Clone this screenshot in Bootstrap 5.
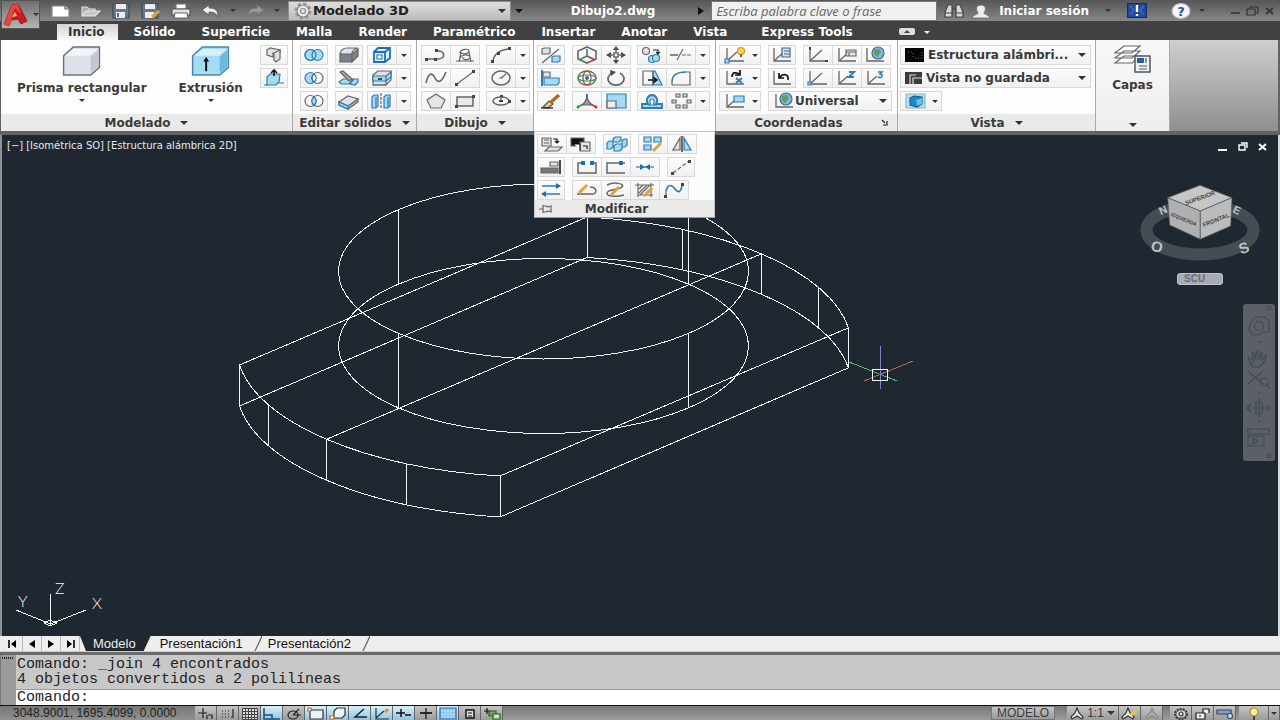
<!DOCTYPE html>
<html lang="es">
<head>
<meta charset="utf-8">
<meta name="viewport" content="width=device-width, initial-scale=1">
<title>Dibujo2.dwg</title>
<link href="https://cdn.jsdelivr.net/npm/bootstrap@5.3.0/dist/css/bootstrap.min.css" rel="stylesheet">
<style>
:root{--ui:"DejaVu Sans","Open Sans",sans-serif;--ink:#3a3a3a;--canvas:#1f2830}
body{font-family:var(--ui);font-size:12px;line-height:16px;color:var(--ink);background:#6a6a6a}
.btn{--bs-btn-padding-x:0;--bs-btn-padding-y:0;--bs-btn-border-radius:0;--bs-btn-font-size:12px;--bs-btn-line-height:16px;--bs-btn-color:var(--ink);font-weight:700;white-space:nowrap;display:inline-flex;align-items:center;justify-content:center}
svg{display:block;flex:none;fill:none;stroke:#666;stroke-width:1.2}
.tri{flex:none;border:4px solid transparent;border-top-color:#333;border-bottom:0;width:0;height:0}
.tri-sm{border-width:3px;border-bottom:0}
.tri-dark{border-top-color:#111}
.tri-light{border-top-color:#eee}
.bl{fill:#a8d9f2;stroke:#2c7db3}.bs{stroke:#2c7db3}.bf{fill:#1f6fa8;stroke:none}.gr{fill:#dfe2e8}.dk{fill:#444;stroke:none}.or{stroke:#e3a136;stroke-width:3}.rd{stroke:#c0392b}.gn{stroke:#2d9a4b}.wt{fill:#fff}
/* title bar */
.titlebar{height:21px;background:linear-gradient(#565656,#868686)}
.titlebar .btn{border:0}
.appbtn{left:1px;top:0;width:39px;height:29px;z-index:5;border:1px solid #555;background:linear-gradient(#6e6e6e,#b5b5b5)}
.qat{padding-left:46px;padding-right:4px}
.qat .btn{width:30px;height:20px}
.qat .caret-btn{width:14px}
.titlebar .workspace{width:223px;height:20px;background:linear-gradient(#dedede,#bcbcbc);border:1px solid #8c8c8c;color:#222;font-size:13px}
.doc-title{color:#fff;font-weight:700;min-width:0}
.search{width:226px;height:20px;border:1px solid #777;border-radius:0;background:#f0f0f0;font:italic 13px/16px "Open Sans",sans-serif;padding:0 4px;color:#666}
.search::placeholder{color:#666;opacity:1}
.find-btn{margin:0 7px}
/* ribbon */
.ribbon-tabs{height:19px;background:#414141;padding-left:57px}
.ribbon-tabs .nav-link{color:#fff;font-weight:700;padding:0 13px;height:16px;line-height:16px;border:0;border-radius:0;white-space:nowrap}
.ribbon-tabs .nav-link.active{color:#333;background:linear-gradient(#d4d4d4,#f8f8f8);padding:0 13px 0 11px;margin-right:3px}
.ribbon{display:grid;grid-template-columns:292px 124px 117px 182px 182px 198px 74px 1fr;height:95px;padding:0 2px 0 1px;border-bottom:4px solid #5f6465;background:#5f6465}
.pane{background:#fdfdfd;border-right:1px solid #a9a9a9;display:flex;flex-direction:column;position:relative;min-width:0}
.pane-body{flex:1;padding-top:5px}
.pane-title{height:17px;background:#eaeaea;color:#3a3a3a;font-weight:700;display:flex;align-items:center;justify-content:center;gap:10px;border:0;padding:0;width:100%}
.pane-title.cornered{padding-right:16px}
.pane-light{background:linear-gradient(#f8f8f8,#eee)}
.tools,.stack{display:grid;row-gap:3px;align-content:start}
.tools-solid{grid-template-columns:35px 32px 44px;padding-left:7px}
.tools-draw{grid-template-columns:65px 44px;padding-left:4px}
.tools-mod{grid-template-columns:35px 65px 74px;padding-left:3px}
.tools-ucs{grid-template-columns:49px 35px 89px;padding-left:3px}
.wide2{grid-column:span 2}
.tb{height:20px;width:28px;border:1px solid #d9d9d9;background:linear-gradient(#fcfcfc,#f1f1f1);flex:none!important}
.btn-group>.tb{width:30px}
.btn-group>.tb-caret{width:15px}
.tb-wide{width:42px}
.combo{height:20px;border:1px solid #d9d9d9;background:linear-gradient(#fcfcfc,#f1f1f1)}
.big{border:0;flex-direction:column;justify-content:flex-start;gap:3px;padding-top:1px}
.solids{padding-left:16px;padding-right:4px}
.big+.big{margin-left:32px}
.flyout{top:91px;left:0;right:0;z-index:4;background:#fcfcfc;border:1px solid #c4c4c4;border-bottom-color:#999}
.flyout-tools{display:flex;flex-direction:column;row-gap:3px;padding:2px 0 0 2px}
.flyout-tools>div{display:flex;gap:7px}
.views{padding-left:2px;padding-right:4px}
.rest{background:linear-gradient(#cfcfcf,#8f8f8f)}
/* drawing area */
.canvas{flex:1;min-height:300px;background:var(--canvas);border-left:2px solid #8d9194;border-right:2px solid #d8dadb}
.drawing{width:calc(100% + 4px);height:100%;margin:0 -2px;stroke:#f2f4f5;stroke-width:1;shape-rendering:crispEdges}
.vp-label{left:5px;top:3px;gap:3px}
.vp-label .btn{color:#e6e8ea;font-size:10px;font-weight:400;border:0}
.vp-win{right:5px;top:4px}
.vp-win .btn{border:0;width:20px;height:16px}
.vcube{right:16px;top:42px}
.btn.scu{right:55px;top:138px;width:46px;height:12px;border:1px solid #c2c3cd;border-radius:3px;background:#a8aab5;font:600 10px/10px "Liberation Sans",sans-serif;justify-content:flex-start;color:#6a6d79;padding-left:6px}
.navbox{right:3px;top:169px;width:32px;height:157px;background:#5b6067;border-radius:3px}
/* layout tabs */
.layouts{height:16px;background:#eee;border-bottom:1px solid #ccc}
.layouts .btn{font:13px/15px "Liberation Sans",Arial,sans-serif;color:#111;border:0;height:15px}
.layouts .step{width:19px;border-right:1px solid #bbb}
.layouts .lt{padding:0 11px 0 6px}
.layouts .lt.active{background:var(--canvas);color:#eee;clip-path:polygon(0 0,100% 0,calc(100% - 7px) 100%,6px 100%);padding:0 15px 0 13px;margin-right:3px}
/* command line */
.cmd{border-top:3px solid #6b6b6b;background:#c8c8c8;font-family:"Liberation Mono","DejaVu Sans Mono",monospace;font-size:15px;line-height:15px;color:#222}
.history{padding:2px 0 2px 1px}
.grip{width:16px;background:#9b9b9b;border-left:1px solid #777}
.cmd-line{border-top:1px solid #999;background:#fff;height:16px;padding-left:1px}
.cmd-line input{border:0;outline:0;background:transparent;flex:1;min-width:0;padding:0}
/* status bar */
.status{height:15px;border-top:1px solid #111;background:linear-gradient(#777,#9c9c9c);font:12px/14px "Liberation Sans",Arial,sans-serif;color:#222}
.coords{width:195px;padding-left:13px;background:linear-gradient(#777,#919191)}
.status .btn{height:14px;width:22px;border:0;border-right:1px solid #666;background:linear-gradient(#c4c4c4,#9b9b9b);font:12px/14px "Liberation Sans",Arial,sans-serif}
.status .btn.on{background:linear-gradient(#d7f0fb,#8fc4dc)}
.status .btn.w-model{width:64px;border:1px solid #777}
.status .btn.w-scale{width:52px;gap:3px;margin-left:12px}
.status .btn.w-space{margin-left:7px}
.status .btn.w-bulb{width:30px;margin-left:3px}
.status .btn.w-menu{width:11px}
</style>
</head>
<body class="d-flex flex-column min-vh-100">

<header class="position-relative">
<button class="btn appbtn position-absolute" aria-label="Menú de aplicación">
<svg width="26" height="26" viewBox="0 0 26 26" stroke="none"><path d="M1 22 9 3 15 2 24 19 18 22 15 17 8 18 6 24z" fill="#c91d19" stroke="#8e1010" stroke-width=".8"/><path d="M9 3 15 2 18 12 12 6 6 24 1 22z" fill="#e8453c" stroke="none"/><path d="M9 15 12 10 14 14z" fill="#f0b8b2" stroke="none"/></svg><span class="tri tri-sm ms-1"></span></button>

<div class="titlebar d-flex align-items-center">
 <div class="qat d-flex align-items-center">
  <button class="btn" aria-label="Nuevo"><svg width="20" height="16" viewBox="0 0 20 16"><path class="wt" stroke="#888" d="M1 3h13l4 3v8H1z"/><path d="M14 3v3h4" fill="#ccc"/></svg></button>
  <button class="btn" aria-label="Abrir"><svg width="20" height="16" viewBox="0 0 20 16"><path fill="#aaa" stroke="#ddd" d="M1 13V4h5l2 2h6v2"/><path fill="#c4c8ce" stroke="#e8e8e8" d="M1 13 5 8h14l-5 5z"/></svg></button>
  <button class="btn" aria-label="Guardar"><svg width="18" height="16" viewBox="0 0 18 16"><path fill="#667790" stroke="#3c4a5e" d="M1 1h16v14H1z"/><path fill="#eee" stroke="none" d="M4 1h10v5H4zM4 9h9v6H4z"/><path d="M6 10v4" stroke-width="2"/></svg></button>
  <button class="btn" aria-label="Guardar como"><svg width="20" height="16" viewBox="0 0 20 16"><path fill="#667790" stroke="#3c4a5e" d="M1 1h16v14H1z"/><path fill="#eee" stroke="none" d="M4 1h10v5H4zM4 9h9v6H4z"/><path class="or" d="m11 14 7-6"/></svg></button>
  <button class="btn" aria-label="Imprimir"><svg width="20" height="16" viewBox="0 0 20 16"><path class="wt" stroke="#777" d="M5 1h10v5H5z"/><path fill="#dfe1e5" stroke="#555" d="M1 6h18v6H1z"/><path class="wt" stroke="#666" d="M4 10h12l1 5H3z"/></svg></button>
  <button class="btn" aria-label="Deshacer"><svg width="20" height="16" viewBox="0 0 20 16"><path fill="#f2f2f2" stroke="#555" stroke-width=".8" d="M1 7 8 2v3c7 0 9 3 9 9-2-4-4-5-9-5v3z"/></svg></button>
  <button class="btn caret-btn" aria-label="Lista deshacer"><span class="tri tri-sm"></span></button>
  <button class="btn" aria-label="Rehacer"><svg width="20" height="16" viewBox="0 0 20 16"><path fill="#999" stroke="#777" d="M19 7 12 2v3c-7 0-9 3-9 9 2-4 4-5 9-5v3z"/></svg></button>
  <button class="btn caret-btn" aria-label="Lista rehacer"><span class="tri tri-sm"></span></button>
 </div>
 <button class="btn workspace justify-content-start px-1"><svg width="20" height="18" viewBox="0 0 20 18"><circle cx="10" cy="9" r="7" stroke="#999" stroke-width="3" stroke-dasharray="3.2 2.3"/><circle cx="10" cy="9" r="6" fill="#e8e8e8" stroke="#888"/><circle cx="10" cy="9" r="2.5" stroke="#888"/></svg>Modelado 3D<span class="tri ms-auto"></span></button>
 <button class="btn px-1" aria-label="Personalizar"><span class="tri tri-dark"></span></button>
 <div class="doc-title flex-grow-1 text-center ps-1">Dibujo2.dwg</div>
 <svg width="16" height="14" viewBox="0 0 16 14"><path fill="#111" stroke="none" d="M3 3l6 4-6 4z"/></svg>
 <input class="search" type="search" placeholder="Escriba palabra clave o frase" aria-label="Buscar">
 <button class="btn find-btn" aria-label="Buscar ayuda"><svg width="20" height="16" viewBox="0 0 20 16"><path fill="#d8d8d8" stroke="#444" d="M4 2h4v12H1V9zM12 2h4l3 7v5h-7z"/><path stroke="#444" d="M8 6h4M1 10h7M12 10h7"/></svg></button>
 <button class="btn"><svg width="20" height="16" viewBox="0 0 20 16"><path fill="#eee" stroke="#777" d="M1 15c0-3 4-3 6-5-3-4-2-8 3-8s6 4 3 8c2 2 6 2 6 5z"/></svg><span class="text-white ms-2">Iniciar sesión</span><span class="tri tri-sm ms-3"></span></button>
 <button class="btn ms-3 me-3" aria-label="Exchange"><svg width="20" height="15" viewBox="0 0 20 15"><path fill="#234a9c" stroke="#152c60" d="M.5.5h19v14H.5z"/><path d="M3 3l4 4-4 5M17 3l-4 4 4 5" stroke="#4a6fb8"/><path d="M10 2v7M10 11v2" stroke="#fff" stroke-width="2.4"/></svg></button>
 <button class="btn ms-2"><svg width="20" height="18" viewBox="0 0 20 18"><ellipse cx="10" cy="9" rx="9" ry="7.5" fill="#f4f6fa" stroke="#bbb"/><text x="10" y="14" font-size="13" font-weight="700" fill="#1f4fa8" stroke="none" text-anchor="middle">?</text></svg><span class="tri tri-sm ms-2"></span></button>
 <div class="d-flex gap-1 ps-4 pe-1">
  <button class="btn" aria-label="Minimizar"><svg width="13" height="14" viewBox="0 0 13 14"><path d="M2 9h9" stroke="#333" stroke-width="1.6"/></svg></button>
  <button class="btn" aria-label="Restaurar"><svg width="13" height="14" viewBox="0 0 13 14"><path stroke="#333" d="M1 5h8v6H1zM4 5V3h8v6H9"/></svg></button>
  <button class="btn" aria-label="Cerrar"><svg width="13" height="14" viewBox="0 0 13 14"><path d="m3 4 7 6M10 4l-7 6" stroke="#333" stroke-width="1.8"/></svg></button>
 </div>
</div>

<nav class="ribbon-tabs nav align-items-end flex-nowrap">
 <a class="nav-link active" href="#">Inicio</a><a class="nav-link" href="#">Sólido</a><a class="nav-link" href="#">Superficie</a><a class="nav-link" href="#">Malla</a><a class="nav-link" href="#">Render</a><a class="nav-link" href="#">Paramétrico</a><a class="nav-link" href="#">Insertar</a><a class="nav-link" href="#">Anotar</a><a class="nav-link" href="#">Vista</a><a class="nav-link ms-2" href="#">Express Tools</a>
 <button class="btn border-0 ms-4 ps-2" aria-label="Minimizar cinta"><svg width="18" height="16" viewBox="0 0 18 16"><rect x="1" y="4" width="16" height="7" rx="2" fill="#dcdfe6" stroke="none"/><path class="dk" d="M6 9l3-3 3 3z"/></svg><span class="tri tri-sm tri-light ms-2"></span></button>
</nav>

<div class="ribbon">
<section class="pane">
 <div class="pane-body d-flex align-items-start solids">
  <button class="btn big"><svg width="40" height="31" viewBox="0 0 40 32"><path fill="#dfe1ea" stroke="#6c707c" stroke-width="1.5" d="M1 10 11 1h27v21L29 30H1z"/><path fill="#f4f4f8" stroke="none" d="M3 10 12 3h24l-8 7z"/><path fill="#c3c6d2" stroke="none" d="M29 11l8-7v17l-8 7z"/></svg><span>Prisma rectangular</span><span class="tri tri-sm"></span></button>
  <button class="btn big"><svg width="40" height="31" viewBox="0 0 40 32"><path fill="#a5dbf3" stroke="#4c87a6" stroke-width="1.5" d="M1 10 11 1h27v21L29 30H1z"/><path fill="#d5f0fb" stroke="none" d="M3 10 12 3h24l-8 7z"/><path fill="#6fb9de" stroke="none" d="M29 11l8-7v17l-8 7z"/><path d="M15 26V14" stroke="#111" stroke-width="2"/><path fill="#111" stroke="none" d="M12 16l3-5 3 5z"/></svg><span>Extrusión</span><span class="tri tri-sm"></span></button>
  <div class="ms-auto stack">
   <button class="btn tb" aria-label="Polisólido"><svg width="26" height="18" viewBox="0 0 26 18"><path class="gr" d="M6 4l3-2 10 2v3l-4 2-3-2v4L6 9z"/><path class="gr" d="M13 7l6-3v9l-4 3-2-2z"/></svg></button>
   <button class="btn tb" aria-label="Pulsartirar"><svg width="26" height="18" viewBox="0 0 26 18"><path class="bl" d="M6 8l3-3h10l-1 8-3 3H6z"/><path d="M3 16h4M18 14h5" class="bs"/><path stroke="#111" stroke-width="1.6" d="M13 7V2M10 4l3-3 3 3"/></svg></button>
  </div>
 </div>
 <button class="pane-title">Modelado <span class="tri"></span></button>
</section>

<section class="pane">
 <div class="pane-body"><div class="tools tools-solid">
  <button class="btn tb" aria-label="Unión"><svg width="26" height="18" viewBox="0 0 26 18"><g class="bl"><circle cx="9.5" cy="9" r="5.5"/><circle cx="16.5" cy="9" r="5.5"/></g><circle cx="9.5" cy="9" r="5.5" class="bs"/></svg></button>
  <button class="btn tb" aria-label="Chaflán"><svg width="26" height="18" viewBox="0 0 26 18"><path fill="#7c8190" d="M4 8h12v8H4zM16 8l6-5v7l-6 6z"/><path class="gr" d="M4 8C5 4 8 2 11 2h11c-4 1-6 3-6 6z"/></svg></button>
  <div class="btn-group"><button class="btn tb" aria-label="Extraer aristas"><svg width="26" height="18" viewBox="0 0 26 18"><path fill="#d7edf8" stroke="#1f6fb0" stroke-width="1.8" d="M5 6h11v10H5zM5 6l4-4h12v10l-5 4M16 6l5-4"/><path d="M8 9h5v4H8z" class="wt" stroke="#2c7db3"/></svg></button><button class="btn tb tb-caret" aria-label="Más aristas"><span class="tri tri-sm"></span></button></div>
  <button class="btn tb" aria-label="Diferencia"><svg width="26" height="18" viewBox="0 0 26 18"><circle class="bl" cx="9.5" cy="9" r="5.5"/><circle cx="16.5" cy="9" r="5.5" fill="#f7f7f7"/><path d="M13 5c-3 2-3 6 0 8 3-2 3-6 0-8z" class="bs"/></svg></button>
  <button class="btn tb" aria-label="Corte"><svg width="26" height="18" viewBox="0 0 26 18"><path class="bl" d="M3 13l4-3h10l-4 5H5zM14 15l4-5h4v3l-3 3z"/><path d="M4 3l3-1 9 8-3 2z" fill="#aaa"/></svg></button>
  <div class="btn-group"><button class="btn tb" aria-label="Estampar caras"><svg width="26" height="18" viewBox="0 0 26 18"><path class="gr" d="M4 6l5-4h13v9l-5 5H4z"/><path class="bl" d="M4 7h13l5-4v5l-5 4H4z"/><path d="M4 16h13V7" /><path class="dk" d="M9 9h4v2H9z"/></svg></button><button class="btn tb tb-caret" aria-label="Más caras"><span class="tri tri-sm"></span></button></div>
  <button class="btn tb" aria-label="Intersección"><svg width="26" height="18" viewBox="0 0 26 18"><circle cx="9.5" cy="9" r="5.5"/><circle cx="16.5" cy="9" r="5.5"/><path class="bl" d="M13 5c-3 2-3 6 0 8 3-2 3-6 0-8z"/></svg></button>
  <button class="btn tb" aria-label="Engrosar"><svg width="26" height="18" viewBox="0 0 26 18"><path fill="#a9b0ba" d="M3 10v3l9 4 10-7V7l-10 6z"/><path class="gr" d="M3 10l9-6 10 3-10 7z"/><path class="bl" d="M3 10v3l9 4v-3z"/></svg></button>
  <div class="btn-group"><button class="btn tb" aria-label="Simetría de sólidos"><svg width="26" height="18" viewBox="0 0 26 18"><path class="bl" d="M3 5l2-2h4v11l-2 2H3zM15 5l2-2h4v11l-2 2h-4z"/><path d="M7 5v11M19 5v11" class="bs"/><path stroke-dasharray="3 1" d="M12 1v16"/></svg></button><button class="btn tb tb-caret" aria-label="Más sólidos"><span class="tri tri-sm"></span></button></div>
 </div></div>
 <button class="pane-title">Editar sólidos <span class="tri"></span></button>
</section>

<section class="pane">
 <div class="pane-body"><div class="tools tools-draw">
  <div class="btn-group"><button class="btn tb" aria-label="Polilínea"><svg width="26" height="18" viewBox="0 0 26 18"><path d="M4 13h11c8 0 7-8 0-8h-2" stroke-width="1.6"/><path class="dk" d="M2 12h3v3H2zM11 12h3v3h-3zM12 3h3v3h-3z"/></svg></button><button class="btn tb" aria-label="Hélice"><svg width="26" height="18" viewBox="0 0 26 18"><path d="M7 16l2-10M19 16 17 6M4 15h18M8 7c0-4 9-5 9-2S9 9 9 6M8 13c0-5 10-5 10-2s-8 4-7 0"/></svg></button></div>
  <div class="btn-group"><button class="btn tb" aria-label="Arco"><svg width="26" height="18" viewBox="0 0 26 18"><path d="M5 15C6 8 11 4 21 3" stroke-width="1.5"/><path class="dk" d="M3 14h3v3H3zM9 6h3v3H9zM20 1h3v3h-3z"/></svg></button><button class="btn tb tb-caret" aria-label="Más arcos"><span class="tri tri-sm"></span></button></div>
  <div class="btn-group"><button class="btn tb" aria-label="Spline"><svg width="26" height="18" viewBox="0 0 26 18"><path stroke-width="1.6" d="M3 14C6 1 10 5 12 9s6 7 11-6"/></svg></button><button class="btn tb" aria-label="Línea"><svg width="26" height="18" viewBox="0 0 26 18"><path d="M5 15 21 3"/><path class="dk" d="M3 14h3v3H3zM20 1h3v3h-3z"/></svg></button></div>
  <div class="btn-group"><button class="btn tb" aria-label="Círculo"><svg width="26" height="18" viewBox="0 0 26 18"><ellipse cx="13" cy="9" rx="9" ry="7" stroke-width="1.5"/><path d="M13 9l5-4M11 9h4"/></svg></button><button class="btn tb tb-caret" aria-label="Más círculos"><span class="tri tri-sm"></span></button></div>
  <div class="btn-group"><button class="btn tb" aria-label="Polígono"><svg width="26" height="18" viewBox="0 0 26 18"><path fill="#e4e6ea" d="M13 2l9 6-4 8H8L4 8z"/></svg></button><button class="btn tb" aria-label="Rectángulo"><svg width="26" height="18" viewBox="0 0 26 18"><path fill="#e8eaee" stroke-width="1.5" d="M5 5h16v9H5z"/><path class="dk" d="M3 13h3v3H3zM20 3h3v3h-3z"/></svg></button></div>
  <div class="btn-group"><button class="btn tb" aria-label="Elipse"><svg width="26" height="18" viewBox="0 0 26 18"><ellipse cx="13" cy="9" rx="8" ry="4" stroke-width="1.5"/><path d="M13 5v5"/><path class="dk" d="M11 8h4v2h-4zM20 8h3v3h-3zM12 3h3v2h-3z"/></svg></button><button class="btn tb tb-caret" aria-label="Más elipses"><span class="tri tri-sm"></span></button></div>
 </div></div>
 <button class="pane-title">Dibujo <span class="tri"></span></button>
</section>

<section class="pane">
 <div class="pane-body"><div class="tools tools-mod">
  <button class="btn tb" aria-label="Alinear 3D"><svg width="26" height="18" viewBox="0 0 26 18"><path class="gr" d="M4 3l2-1h6v5l-2 1H4z"/><path class="bl" d="M14 11l2-1h6v5l-2 1h-6z"/><path d="M4 17 21 3"/></svg></button>
  <div class="btn-group"><button class="btn tb" aria-label="Desplazar 3D"><svg width="26" height="18" viewBox="0 0 26 18"><path stroke-width="1.6" d="M13 1l9 4v8l-9 4-9-4V5z"/><path class="bs" stroke-width="1.6" d="M13 3v7"/><path class="gn" stroke-width="1.6" d="M13 10l-8 4"/><path class="rd" stroke-width="1.6" d="M13 10l8 4"/></svg></button><button class="btn tb" aria-label="Desplazar"><svg width="26" height="18" viewBox="0 0 26 18"><path class="dk" d="M13 0l3 4h-6zM13 18l3-4h-6zM3 9l5-3v6zM23 9l-5-3v6z"/><path stroke-width="1.5" d="M13 3v3M13 12v3M6 9h4M16 9h4M11 7h4v4h-4z"/></svg></button></div>
  <div class="btn-group"><button class="btn tb" aria-label="Copiar"><svg width="26" height="18" viewBox="0 0 26 18"><circle cx="7" cy="5" r="3.5" class="gr"/><circle class="bl" cx="13" cy="13" r="3.5"/><circle class="bl" cx="17" cy="12" r="3.5"/><path stroke="#222" d="M14 4h5v4M17 6l2 2 2-2"/></svg></button><button class="btn tb" aria-label="Recortar"><svg width="26" height="18" viewBox="0 0 26 18"><path d="M2 9h8" stroke-width="1.5"/><path class="bs" stroke-dasharray="4 1" d="M14 9h10"/><path d="M9 14l6-11"/></svg></button><button class="btn tb tb-caret" aria-label="Más recortes"><span class="tri tri-sm"></span></button></div>
  <button class="btn tb" aria-label="Alinear"><svg width="26" height="18" viewBox="0 0 26 18"><path d="M4 1v16" class="bs" stroke-width="2"/><path class="gr" d="M5 3h7v5H5z"/><path class="bl" d="M6 9h15v5l-2 2H6z"/></svg></button>
  <div class="btn-group"><button class="btn tb" aria-label="Girar 3D"><svg width="26" height="18" viewBox="0 0 26 18"><ellipse cx="13" cy="9" rx="9" ry="7" stroke-width="1.4"/><ellipse class="rd" cx="13" cy="9" rx="4" ry="7"/><ellipse class="gn" cx="13" cy="9" rx="9" ry="3"/><circle cx="13" cy="9" r="2" class="bf"/></svg></button><button class="btn tb" aria-label="Girar"><svg width="26" height="18" viewBox="0 0 26 18"><path stroke-width="1.7" d="M9 4a8 6.5 0 1 0 8 0"/><path class="dk" d="M7 1l6 2-5 4z"/></svg></button></div>
  <div class="btn-group"><button class="btn tb" aria-label="Estirar"><svg width="26" height="18" viewBox="0 0 26 18"><path class="bl" d="M14 2h2l7 14h-9z"/><path d="M4 2h10v14H4z"/><path stroke="#111" stroke-width="1.5" d="M9 11h8M14 8l4 3-4 3"/></svg></button><button class="btn tb" aria-label="Empalme"><svg width="26" height="18" viewBox="0 0 26 18"><path d="M4 16h18V3h-4M4 16v-3"/><path class="bs" stroke-width="1.6" d="M4 13C4 6 9 3 18 3"/></svg></button><button class="btn tb tb-caret" aria-label="Más empalmes"><span class="tri tri-sm"></span></button></div>
  <button class="btn tb" aria-label="Borrar"><svg width="26" height="18" viewBox="0 0 26 18"><path d="M13 10l8-7" stroke="#b56a22" stroke-width="3.5"/><path fill="#e7c48d" stroke="#555" d="M5 15l6-6 4 3-5 4z"/><path stroke="#111" d="M3 16h12"/></svg></button>
  <div class="btn-group"><button class="btn tb" aria-label="Escala 3D"><svg width="26" height="18" viewBox="0 0 26 18"><path d="M13 9V2" class="bs" stroke-width="2"/><path class="gn" stroke-width="2" d="M13 10l-9 5"/><path class="rd" stroke-width="2" d="M13 10l9 5"/><path fill="#999" d="M13 6l4 7H9z"/><circle cx="4" cy="15" r="1.5" fill="#2d9a4b" stroke="none"/><circle cx="22" cy="15" r="1.5" fill="#c0392b" stroke="none"/></svg></button><button class="btn tb" aria-label="Escala"><svg width="26" height="18" viewBox="0 0 26 18"><path class="bl" d="M4 2h19v14H4z"/><path fill="#eee" d="M4 9h9v7H4z"/></svg></button></div>
  <div class="btn-group"><button class="btn tb" aria-label="Desfase"><svg width="26" height="18" viewBox="0 0 26 18"><path class="bl" stroke-width="1.8" d="M3 16v-4h6c-3-4 0-9 4-9s7 5 4 9h6v4z"/><path class="wt" stroke="#2c7db3" d="M9 13h3c-2-3-1-6 1-6s3 3 1 6h4"/></svg></button><button class="btn tb" aria-label="Matriz"><svg width="26" height="18" viewBox="0 0 26 18"><path fill="#ddd" d="M8 2h4v3H8zM15 2h4v3h-4zM4 8h4v3H4zM19 8h4v3h-4zM8 13h4v3H8zM15 13h4v3h-4z"/></svg></button><button class="btn tb tb-caret" aria-label="Más matrices"><span class="tri tri-sm"></span></button></div>
 </div></div>
 <div class="flyout position-absolute">
  <div class="flyout-tools">
   <div>
    <div class="btn-group"><button class="btn tb" aria-label="Definir por capa"><svg width="26" height="18" viewBox="0 0 26 18"><path class="gr" d="M3 3h9v8H3zM5 5h5M5 8h5"/><path class="gr" d="M6 16l4-4h13l-4 4z"/><path stroke="#111" d="M14 4h4v4M16 6l2 2 2-2"/></svg></button><button class="btn tb" aria-label="Cambiar espacio"><svg width="26" height="18" viewBox="0 0 26 18"><path fill="#111" d="M3 3h13v8H3z"/><path class="gr" d="M12 7h10v9H12z"/><path fill="#fff" stroke="#111" d="M6 9h6v6M15 11h4v3"/></svg></button></div>
    <button class="btn tb" aria-label="Matriz 3D"><svg width="26" height="18" viewBox="0 0 26 18"><path class="bl" d="M9 4l2-2h6v3l-2 2H9zM18 6l2-2h3v6l-2 2h-3zM3 8l2-2h4v6l-2 2H3zM10 11l2-2h6v5l-2 2h-6z"/></svg></button>
    <div class="btn-group"><button class="btn tb" aria-label="Editar matriz"><svg width="26" height="18" viewBox="0 0 26 18"><path class="bl" d="M4 2h7v5H4zM14 2h7v5h-7zM4 10h7v5H4z"/><path class="or" d="m13 16 8-8"/></svg></button><button class="btn tb" aria-label="Simetría"><svg width="26" height="18" viewBox="0 0 26 18"><path class="gr" d="M11 3v12H4z"/><path class="bl" d="M15 3v12h7z"/><path stroke="#111" d="M13 1v16"/></svg></button></div>
   </div>
   <div>
    <button class="btn tb" aria-label="Alinear objetos"><svg width="26" height="18" viewBox="0 0 26 18"><path class="gr" d="M12 4h8v4h-8z"/><path fill="#777" d="M3 10h17v5H3z"/><path d="M22 2v14" stroke="#111" stroke-width="1.5"/></svg></button>
    <div class="btn-group"><button class="btn tb" aria-label="Partir"><svg width="26" height="18" viewBox="0 0 26 18"><path stroke-width="1.5" d="M8 5H4v10h18V5h-4"/><path class="bf" d="M7 3h4v4H7zM16 3h4v4h-4z"/></svg></button><button class="btn tb" aria-label="Partir en punto"><svg width="26" height="18" viewBox="0 0 26 18"><path stroke-width="1.5" d="M22 5H4v10h18"/><path class="bf" d="M16 3h4v4h-4z"/></svg></button><button class="btn tb" aria-label="Juntar"><svg width="26" height="18" viewBox="0 0 26 18"><path d="M4 9h18" class="bs"/><path class="bf" d="M8 6l5 3-5 3zM18 6l-5 3 5 3z"/></svg></button></div>
    <button class="btn tb" aria-label="Longitud"><svg width="26" height="18" viewBox="0 0 26 18"><path stroke-dasharray="4 2" d="M5 15 21 3"/><path class="dk" d="M3 14h3v3H3zM20 2h3v3h-3z"/></svg></button>
   </div>
   <div>
    <button class="btn tb" aria-label="Invertir"><svg width="26" height="18" viewBox="0 0 26 18"><path stroke-width="1.5" d="M4 5h15M8 13h14" class="bs"/><path class="bf" d="M18 2l5 3-5 3zM8 10l-5 3 5 3z"/></svg></button>
    <div class="btn-group"><button class="btn tb" aria-label="Editar polilínea"><svg width="26" height="18" viewBox="0 0 26 18"><path d="M3 13h15c6 0 5-7-2-7" stroke-width="1.5"/><path class="or" d="m5 12 8-8"/></svg></button><button class="btn tb" aria-label="Editar spline"><svg width="26" height="18" viewBox="0 0 26 18"><path d="M4 4c8-4 18-1 15 2S4 8 4 12s10 4 17 2" stroke-width="1.5"/><path class="or" d="m8 14 8-8"/></svg></button><button class="btn tb" aria-label="Editar sombreado"><svg width="26" height="18" viewBox="0 0 26 18"><path d="M6 2v14M3 4h19M6 14h15M19 2v14M7 8l4-4M7 12l8-8M8 14l10-10"/><path class="or" d="m12 15 8-8"/></svg></button><button class="btn tb" aria-label="Fusionar curvas"><svg width="26" height="18" viewBox="0 0 26 18"><path class="bs" stroke-width="1.7" d="M5 10c2-8 6-6 9-2s6 4 7-4"/><path d="M5 10v5M21 3h2"/><path class="dk" d="M3 14h3v3H3zM20 2h3v3h-3z"/></svg></button></div>
   </div>
  </div>
  <button class="pane-title cornered position-relative"><svg class="position-absolute start-0 ms-1" width="14" height="12" viewBox="0 0 14 12"><path d="M0 6h4M4 2v8M4 3h3c1 1 3 1 5 0v6c-2-1-4-1-5 0H4"/></svg>Modificar</button>
 </div>
</section>

<section class="pane">
 <div class="pane-body"><div class="tools tools-ucs">
  <button class="btn tb tb-wide" aria-label="Icono SCU"><svg width="26" height="18" viewBox="0 0 26 18"><path d="M5 2v13h17M6 14l9-8" stroke-width="1.3"/><path class="bl" d="M3 13h4v4H3z"/><circle cx="19" cy="5" r="3.5" fill="#ffd34d" stroke="#d99a1c"/><path d="M19 8v3" stroke-width="2"/></svg><span class="tri tri-sm ms-1"></span></button>
  <button class="btn tb" aria-label="SCU"><svg width="26" height="18" viewBox="0 0 26 18"><path d="M5 2v13h17M6 14l9-8" stroke-width="1.3"/><path class="gr" stroke="#35618a" d="M13 2h8v9h-8zM15 5h5M15 8h5"/></svg></button>
  <div class="btn-group"><button class="btn tb" aria-label="Origen"><svg width="26" height="18" viewBox="0 0 26 18"><path d="M5 2v13h17M6 14 17 4" stroke-width="1.3"/><path class="dk" d="M4 1h2v3H4zM20 14h3v2h-3z"/></svg></button><button class="btn tb" aria-label="SCU con nombre"><svg width="26" height="18" viewBox="0 0 26 18"><path d="M5 2v13h17M6 14l8-7" stroke-width="1.3"/><path class="gr" d="M12 4h10v6H12zM12 6h10M15 7v3"/></svg></button><button class="btn tb" aria-label="SCU universal"><svg width="26" height="18" viewBox="0 0 26 18"><path d="M4 2v13h17" stroke-width="1.3"/><circle cx="15" cy="7" r="6" fill="#7db9d8" stroke="#44708c"/><path fill="#5f9a6a" stroke="none" d="M11 4l5-1 2 3-4 5-3-3z"/></svg></button></div>
  <button class="btn tb tb-wide" aria-label="Girar eje X"><svg width="26" height="18" viewBox="0 0 26 18"><path d="M5 2v13h17" stroke-width="1.3"/><path stroke="#111" stroke-width="1.7" d="M10 8c0-5 4-5 7-3M18 1v5h-5"/><path class="bs" stroke-width="2" d="M14 9l6 5M20 9l-6 5"/></svg><span class="tri tri-sm ms-1"></span></button>
  <button class="btn tb" aria-label="SCU previo"><svg width="26" height="18" viewBox="0 0 26 18"><path d="M5 2v13h17" stroke-width="1.3"/><path stroke="#111" stroke-width="1.7" d="M11 8c3-4 9-3 8 3M10 4v5h5"/></svg></button>
  <div class="btn-group"><button class="btn tb" aria-label="SCU origen"><svg width="26" height="18" viewBox="0 0 26 18"><path d="M5 2v13h17M6 14 17 4" stroke-width="1.3"/><path class="bl" d="M3 13h3v3H3z"/></svg></button><button class="btn tb" aria-label="Eje Z"><svg width="26" height="18" viewBox="0 0 26 18"><path d="M5 2v13h17M6 14l8-7" stroke-width="1.3"/><path class="bs" stroke-width="2" d="M15 3h5l-5 5h5"/></svg></button><button class="btn tb" aria-label="3 puntos"><svg width="26" height="18" viewBox="0 0 26 18"><path d="M5 2v13h17M6 14l8-7" stroke-width="1.3"/><path class="bs" stroke-width="1.6" d="M15 3h4l-2 2c4 0 2 5-2 3"/></svg></button></div>
  <button class="btn tb tb-wide" aria-label="Vista SCU"><svg width="26" height="18" viewBox="0 0 26 18"><path d="M5 2v13h17M6 14l6-5" stroke-width="1.3"/><path class="bl" d="M12 4h10v6H12z"/></svg><span class="tri tri-sm ms-1"></span></button>
  <button class="btn combo wide2 justify-content-start px-1"><svg width="22" height="18" viewBox="2 0 22 18"><path d="M5 2v13h17" stroke-width="1.3"/><circle cx="15" cy="7" r="6" fill="#7db9d8" stroke="#44708c"/><path fill="#5f9a6a" stroke="none" d="M11 4l5-1 2 3-4 5-3-3z"/></svg>Universal<span class="tri ms-auto"></span></button>
 </div></div>
 <button class="pane-title cornered position-relative">Coordenadas<svg class="position-absolute end-0 me-2" width="8" height="8" viewBox="0 0 8 8"><path stroke="#222" d="M1 1l3 3M6 2v4H2"/></svg></button>
</section>

<section class="pane">
 <div class="pane-body stack views">
  <button class="btn combo justify-content-start px-1"><svg width="19" height="14" viewBox="0 0 19 14"><path fill="#050505" stroke="none" d="M0 0h19v14H0z"/><path stroke="#888" stroke-width=".8" stroke-dasharray="1 2" d="M3 4h5v6M10 10h7V3"/></svg><span class="ms-1">Estructura alámbri...</span><span class="tri ms-auto"></span></button>
  <button class="btn combo justify-content-start px-1"><svg width="17" height="13" viewBox="0 0 17 13"><path fill="#3c3c3c" stroke="none" d="M0 0h17v12H0z"/><path stroke="#ddd" d="M5 12V3h6M8 12V6h9"/></svg><span class="ms-1">Vista no guardada</span><span class="tri ms-auto"></span></button>
  <button class="btn tb tb-wide" aria-label="Estilo visual"><svg width="24" height="18" viewBox="0 0 24 18"><path fill="#b7def2" stroke="#8bb" d="M2 2h19v14H2z"/><path fill="#1f86c9" stroke="#1a5f93" d="M6 6l4-2 8 1v7l-5 3-7-2z"/><path fill="#69bdec" stroke="none" d="M12 8l6-2v6l-5 2z"/></svg><span class="tri tri-sm ms-1"></span></button>
 </div>
 <button class="pane-title">Vista <span class="tri"></span></button>
</section>

<section class="pane pane-light">
 <button class="btn big flex-grow-1 pt-1 pb-1"><svg width="40" height="30" viewBox="0 0 40 30"><path class="wt" stroke="#666" d="M2 19 11 12h16l-8 7zM2 14l9-7h16l-8 7zM2 9l9-7h16l-8 7z"/><path fill="#eef2f6" stroke="#556" stroke-width="1.5" d="M22 12h15v16H22z"/><path fill="#2a5d96" stroke="none" d="M24 14h7v5h-7z"/><path stroke="#555" d="M33 14v5M26 22h8M26 25h8"/></svg><span>Capas</span><span class="tri mt-auto"></span></button>
</section>
<div class="rest"></div>
</div>
</header>

<main class="canvas position-relative overflow-hidden d-flex">
<svg class="drawing" viewBox="0 135 1280 501" role="img" aria-label="Sólido en isométrica">
 <ellipse cx="543.5" cy="271.5" rx="205" ry="87.5"/><ellipse cx="543.5" cy="346" rx="205" ry="87.5"/>
 <path d="M398.5 210v74.5M688.5 210v74.5M398.5 334v74M688.5 334v74"/>
 <path d="M239.5 365 587 217M239.5 406 587 257.5M326 439.5 761 254M500 476l348-148M500 517l348-149"/>
 <path d="M239.5 365v41M268.5 404v41M326.5 439v42M406.5 463v41M500.5 476v41M587.5 217v41M682.5 229v41M761.5 254v41M818.5 287v42M848.5 328v40"/>
 <path d="M239.5 365A306 130.5 0 0 0 500 476M239.5 406A306 130.5 0 0 0 500 517M587 217A306 130.5 0 0 1 848.5 328M587 257.5A306 130.5 0 0 1 848.5 368"/>
 <path d="M849 362l48 19" stroke="#5fae7c"/><path d="M864 381l49-20" stroke="#b5625c"/><path d="M880.5 346v43" stroke="#8080cc"/><path d="M872.5 369.5h15v11h-15z"/>
 <path d="M50.5 594v30M16 610l34.5 14L86 610M44 623l6-3 7 3-7 3z"/>
 <g font-family="Lato" font-weight="300" font-size="16" fill="#f2f4f5" stroke="none"><text x="55" y="594">Z</text><text x="18" y="607">Y</text><text x="92" y="609">X</text></g>
</svg>
<div class="vp-label position-absolute d-flex"><button class="btn">[−]</button><button class="btn">[Isométrica SO]</button><button class="btn">[Estructura alámbrica 2D]</button></div>
<div class="vp-win position-absolute d-flex">
 <button class="btn" aria-label="Minimizar vista"><svg width="12" height="12" viewBox="0 0 12 12"><path stroke="#fff" stroke-width="2" d="M1 9h9"/></svg></button>
 <button class="btn" aria-label="Restaurar vista"><svg width="12" height="12" viewBox="0 0 12 12"><path stroke="#fff" stroke-width="1.4" d="M2 4h6v5H2zM4 2h6v5"/></svg></button>
 <button class="btn" aria-label="Cerrar vista"><svg width="12" height="12" viewBox="0 0 12 12"><path stroke="#fff" stroke-width="2" d="m2 3 7 6M9 3l-7 6"/></svg></button>
</div>
<svg class="vcube position-absolute" width="124" height="90" viewBox="1138 177 124 90" role="img" aria-label="Cubo de vistas">
 <ellipse cx="1200" cy="230" rx="53.5" ry="24.5" stroke="#444c54" stroke-width="12"/>
 <g fill="#bfc2c5" stroke="none" font-family="Liberation Sans" font-weight="700" text-anchor="middle"><text font-size="15" x="1157" y="252" transform="rotate(15 1157 247)">O</text><text font-size="15" x="1244" y="253" transform="rotate(-20 1244 248)">S</text><text font-size="11" x="1163" y="214" transform="rotate(-25 1163 210)">N</text><text font-size="11" x="1237" y="214" transform="rotate(25 1237 210)">E</text></g>
 <g stroke="#555" stroke-width=".7"><path fill="#c6c6c6" d="M1200 185.3 1232 197.7 1200.3 211 1167.7 197.7z"/><path fill="#aeb0b2" d="M1167.7 197.7 1200.3 211v28.3l-30.6-14.3z"/><path fill="#b9bbbd" d="M1232 197.7 1200.3 211v28.3l30.4-13.3z"/></g>
 <g fill="#444" stroke="none" font-family="Liberation Sans" font-size="6" font-weight="700" text-anchor="middle"><text x="1200" y="200" transform="rotate(-20 1200 198)">SUPERIOR</text><text x="1184" y="221" transform="rotate(23 1184 219)" font-size="5">IZQUIERDA</text><text x="1216" y="222" transform="rotate(-22 1216 220)">FRONTAL</text></g>
</svg>
<button class="btn scu position-absolute">SCU</button>
<div class="navbox position-absolute">
 <svg width="32" height="157" viewBox="0 0 32 157"><g stroke="#434a51"><circle cx="26" cy="4" r="2"/><path d="M8 18l4-5h10l4 4v11h-6l-3 3h-7l-4-5z"/><circle cx="16" cy="22" r="4.5"/><path d="M15 38h3"/><path d="M9 60c-5-6-5-7-2-6l4 3-2-8c2-2 3 5 4 6l0-8c2-1 2 6 3 8l2-7c2 0 0 6 1 8l4-5c2 1-2 6-3 8-2 5-10 6-13 1z"/><path d="M5 67l15 13M20 67 5 80"/><circle cx="21" cy="78" r="4"/><path d="M24 81l3 4M15 89h3M16 94v20M5 104h22M8 100l-4 4 4 4M24 100l3 4-3 4M13 98h6v12h-6zM15 117h3M5 125h21v5H5zM5 132h16v10H5zM10 134l5 3-5 3z"/><circle cx="26" cy="152" r="2"/></g></svg>
</div>
</main>

<div class="layouts d-flex align-items-start ps-1">
 <button class="btn step" aria-label="Primera"><svg width="12" height="10" viewBox="0 0 12 10"><path d="M2 1v8" stroke="#000" stroke-width="1.6"/><path fill="#000" stroke="none" d="M9 1v8L4 5z"/></svg></button>
 <button class="btn step" aria-label="Anterior"><svg width="12" height="10" viewBox="0 0 12 10"><path fill="#000" stroke="none" d="M9 1v8L3 5z"/></svg></button>
 <button class="btn step" aria-label="Siguiente"><svg width="12" height="10" viewBox="0 0 12 10"><path fill="#000" stroke="none" d="M3 1v8l6-4z"/></svg></button>
 <button class="btn step" aria-label="Última"><svg width="12" height="10" viewBox="0 0 12 10"><path d="M10 1v8" stroke="#000" stroke-width="1.6"/><path fill="#000" stroke="none" d="M3 1v8l5-4z"/></svg></button>
 <button class="btn lt active">Modelo</button>
 <button class="btn lt">Presentación1</button>
 <svg width="8" height="15" viewBox="0 0 8 15"><path d="M8 0 1 15"/></svg>
 <button class="btn lt">Presentación2</button>
 <svg width="8" height="15" viewBox="0 0 8 15"><path d="M8 0 1 15"/></svg>
</div>

<div class="cmd d-flex">
 <div class="grip"><svg width="14" height="6" viewBox="0 0 14 6"><path d="M1 3h12" stroke="#222" stroke-dasharray="1 1" stroke-width="2"/></svg></div>
 <div class="flex-grow-1">
  <div class="history"><div>Comando: _join 4 encontrados</div><div>4 objetos convertidos a 2 polilíneas</div></div>
  <div class="cmd-line d-flex align-items-center"><label for="cmd">Comando:</label><input id="cmd" type="text" autocomplete="off"></div>
 </div>
</div>

<footer class="status d-flex">
 <div class="coords text-nowrap">3048.9001, 1695.4099, 0.0000</div>
 <button class="btn" aria-label="Inferir"><svg width="18" height="13" viewBox="0 0 18 13"><path stroke="#222" d="M1 6h9M6 1v10M11 8h4v4M10 8v4"/></svg></button>
 <button class="btn" aria-label="Forzar cursor"><svg width="18" height="13" viewBox="0 0 18 13"><path stroke="#222" stroke-dasharray="1 2" d="M3 4h9M3 7h9M3 10h12"/><path d="M14 2v9" stroke="#222"/></svg></button>
 <button class="btn" aria-label="Rejilla"><svg width="18" height="13" viewBox="0 0 18 13"><path fill="#ddd" stroke="#444" stroke-width="1" d="M1.5 1.5h15v11h-15zM1 4.5h16M1 7.5h16M1 10.5h16M4.5 1v12M7.5 1v12M10.5 1v12M13.5 1v12"/></svg></button>
 <button class="btn on" aria-label="Orto"><svg width="18" height="13" viewBox="0 0 18 13"><path stroke="#1b4f6d" stroke-width="1.5" d="M1 1v11h16M1 8h8v4"/></svg></button>
 <button class="btn" aria-label="Polar"><svg width="18" height="13" viewBox="0 0 18 13"><ellipse cx="8" cy="8" rx="5" ry="4" stroke="#222"/><path stroke="#222" d="M8 8h8M8 8l6-6"/></svg></button>
 <button class="btn on" aria-label="Refent"><svg width="18" height="13" viewBox="0 0 18 13"><path fill="#e8f4fa" stroke="#333" d="M3 3h13v9H3z"/><path fill="#fff" stroke="#b86a3c" d="M1 1h3v3H1z"/></svg></button>
 <button class="btn on" aria-label="Refent 3D"><svg width="18" height="13" viewBox="0 0 18 13"><path fill="#e8f4fa" stroke="#333" d="M5 4l3-3h8v7l-3 3H5z"/><path fill="#fff" stroke="#b86a3c" d="M1 9h4v3H1z"/></svg></button>
 <button class="btn on" aria-label="Rastreo"><svg width="18" height="13" viewBox="0 0 18 13"><path stroke="#222" stroke-width="1.5" d="M13 2 4 10h12"/></svg></button>
 <button class="btn on" aria-label="SCU dinámico"><svg width="18" height="13" viewBox="0 0 18 13"><path stroke="#234" d="M3 1v11h13M3 11l8-7"/><path stroke="#e0942e" stroke-width="3" d="M12 5l3-3"/></svg></button>
 <button class="btn on" aria-label="Entrada dinámica"><svg width="18" height="13" viewBox="0 0 18 13"><path stroke="#111" stroke-width="1.5" d="M1 6h9M6 2v8M10 8h6"/></svg></button>
 <button class="btn" aria-label="Grosor"><svg width="18" height="13" viewBox="0 0 18 13"><path stroke="#111" d="M9 1v11"/><path stroke="#111" stroke-width="1.7" d="M3 6h12"/></svg></button>
 <button class="btn on" aria-label="Transparencia"><svg width="18" height="13" viewBox="0 0 18 13"><path fill="#8ec6ea" stroke="#2a6aa0" d="M1 1h16v11H1z"/><path stroke="#d8edf9" stroke-dasharray="2 1" d="M2 4h14M2 7h14M2 10h14"/></svg></button>
 <button class="btn" aria-label="Propiedades rápidas"><svg width="18" height="13" viewBox="0 0 18 13"><path fill="#ddd" stroke="#111" stroke-width="1.5" d="M5 3h8v8H5z"/><path stroke="#111" d="M7 6h4M7 9h4"/></svg></button>
 <button class="btn" aria-label="Ciclo de selección"><svg width="18" height="13" viewBox="0 0 18 13"><path stroke="#111" d="M1 4h6M4 1v6"/><path fill="#6fa85d" stroke="#2d5b24" d="M6 4h7v5H6z"/><path fill="#cfe3c6" stroke="#2d5b24" d="M10 7h7v5h-7z"/></svg></button>
 <button class="btn w-model ms-auto">MODELO</button>
 <button class="btn w-scale"><svg width="14" height="13" viewBox="0 0 14 13"><path fill="#eee" stroke="#333" d="M7 1l2 5 4 4-1 2-5-3-5 3-1-2 4-4z"/></svg>1:1<span class="tri"></span></button>
 <button class="btn" aria-label="Visibilidad de anotaciones"><svg width="18" height="13" viewBox="0 0 18 13"><path fill="#eee" stroke="#333" d="M7 1l2 5 4 4-1 2-5-3-5 3-1-2 4-4z"/><path stroke="#f2c230" stroke-width="3" d="M10 8l5-4"/></svg></button>
 <button class="btn" aria-label="Escalas automáticas"><svg width="18" height="13" viewBox="0 0 18 13"><path fill="#aaa" stroke="#888" d="M9 1l2 5 4 4-1 2-5-3-5 3-1-2 4-4z"/></svg></button>
 <button class="btn w-space" aria-label="Espacio de trabajo"><svg width="18" height="13" viewBox="0 0 18 13"><ellipse cx="9" cy="7" rx="6" ry="5" stroke="#333" stroke-width="2" stroke-dasharray="2 1"/><ellipse cx="9" cy="7" rx="5" ry="4" fill="#ddd"/><circle cx="9" cy="7" r="2" stroke="#333"/></svg></button>
 <button class="btn" aria-label="Bloquear"><svg width="18" height="13" viewBox="0 0 18 13"><path fill="#eee" stroke="#222" d="M2 6h9v6H2zM9 6V2h6v4"/><path stroke="#222" d="M6 8v2"/></svg></button>
 <button class="btn" aria-label="Aceleración"><svg width="18" height="13" viewBox="0 0 18 13"><path fill="#7da3c4" stroke="#345" d="M1 3h14v4H1z"/><circle cx="14" cy="9" r="2.5" fill="#cfe4f5" stroke="#357"/></svg></button>
 <button class="btn w-bulb" aria-label="Aislar objetos"><svg width="18" height="13" viewBox="0 0 18 13"><circle cx="9" cy="5" r="4" fill="#ffee8a" stroke="#a98b20"/><path stroke="#444" stroke-width="2" d="M9 9v4"/></svg></button>
 <button class="btn w-menu" aria-label="Menú de barra de estado"><span class="tri tri-sm"></span></button>
</footer>
<script src="https://cdn.jsdelivr.net/npm/bootstrap@5.3.0/dist/js/bootstrap.bundle.min.js"></script>
</body>
</html>
